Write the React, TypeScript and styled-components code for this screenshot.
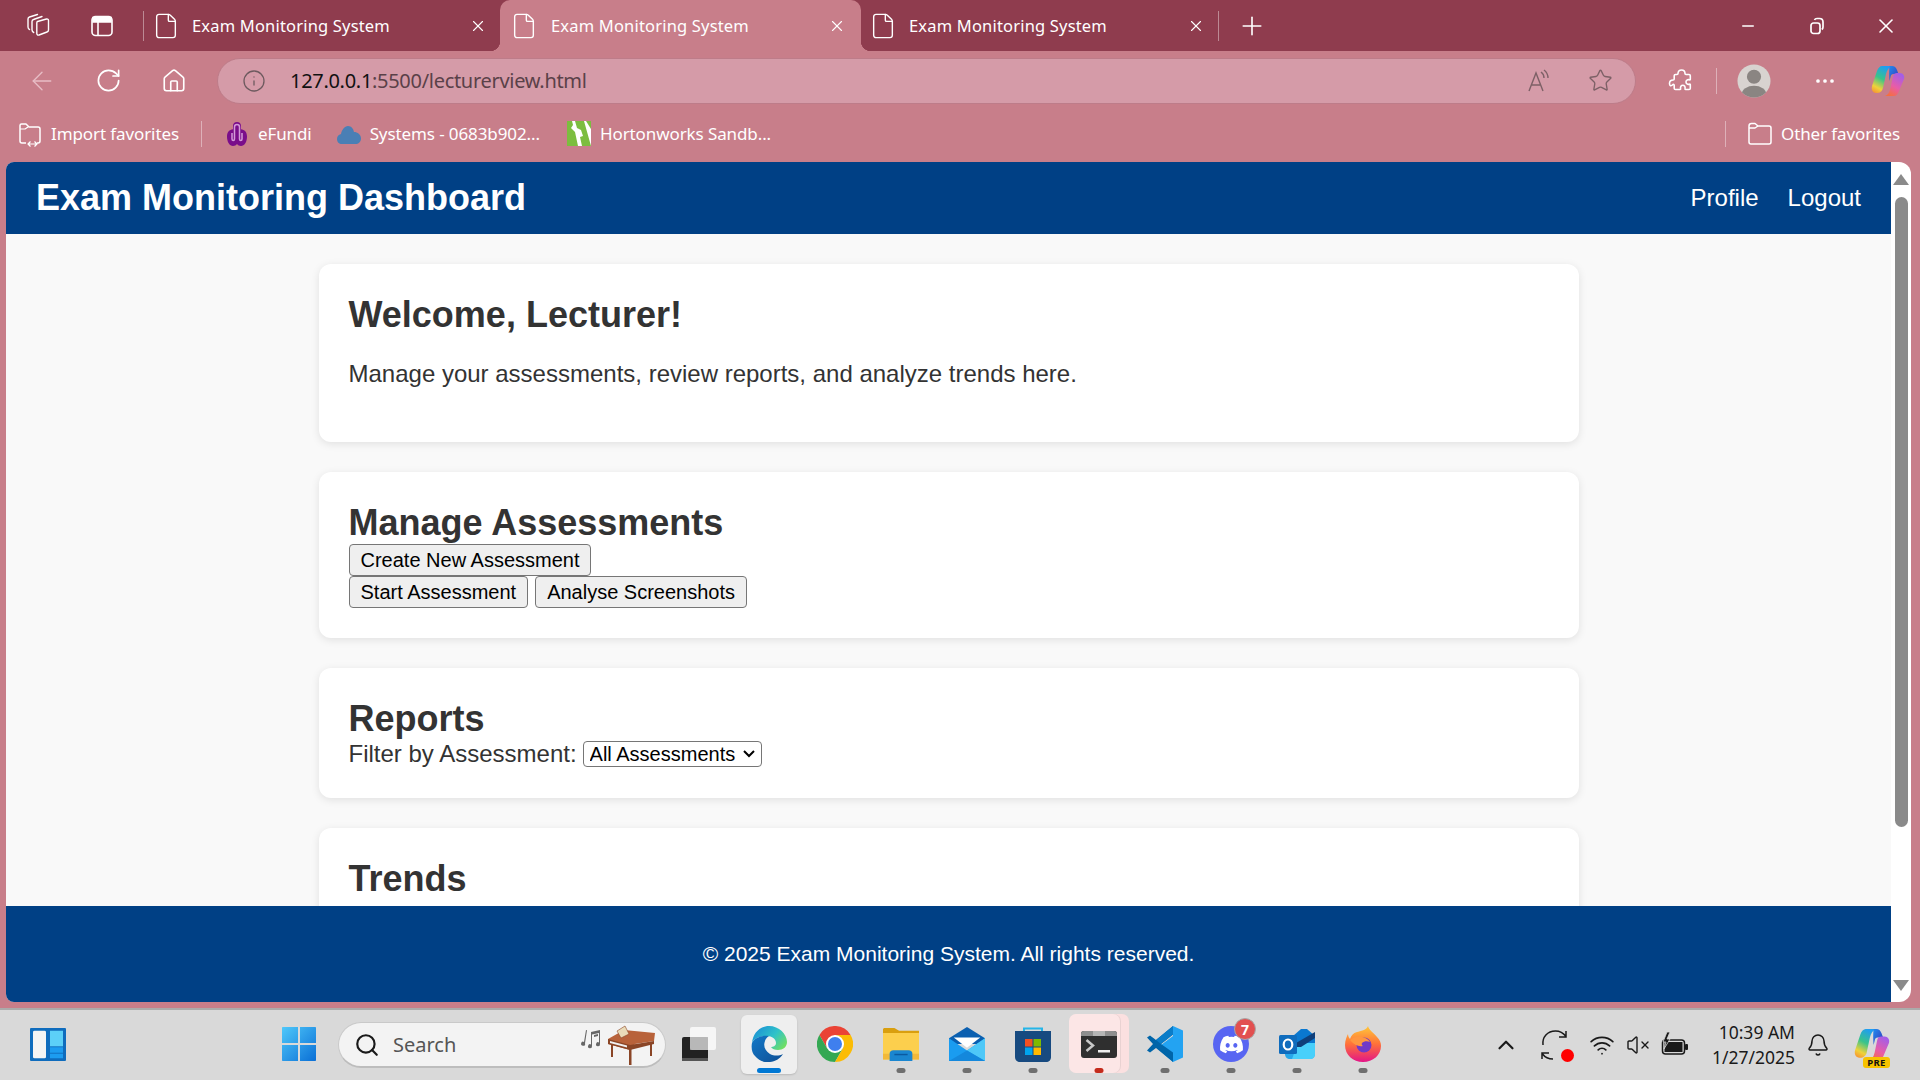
import React from "react";
import styled, { createGlobalStyle } from "styled-components";
import { ArrowLeft, RotateCw, Home, Info, Star, MoreHorizontal, Plus, X, File, Minus, Search, ChevronUp, Bell, Wifi, VolumeX } from "lucide-react";
import { FaDiscord } from "react-icons/fa6";

const Global = createGlobalStyle`
  html, body { margin: 0; padding: 0; width: 1920px; height: 1080px; overflow: hidden; }
  body { font-family: "Liberation Sans", Arial, sans-serif; }
`;

const UI = `"Noto Sans", "Open Sans", sans-serif`;

const Screen = styled.div`
  width: 1920px; height: 1080px; display: flex; flex-direction: column; background: #c87e8a; overflow: hidden;
`;
const TabStrip = styled.div`
  height: 51px; flex: none; background: #8f3c4e; display: flex; align-items: stretch; color: #fff; font-family: ${UI};
`;
const StripTools = styled.div`
  display: flex; padding-left: 6px; align-items: center;
`;
const Slot = styled.div<{ $w?: number; $dark?: boolean }>`
  width: ${(p) => p.$w ?? 66}px; flex: none; display: flex; align-items: center; justify-content: center; color: ${(p) => (p.$dark ? "#1a1a1a" : "#fff")};
`;
const VLine = styled.div<{ $h?: number; $ml?: number; $mr?: number }>`
  width: 1px; height: ${(p) => p.$h ?? 30}px; align-self: center; flex: none;
  margin-left: ${(p) => p.$ml ?? 0}px; margin-right: ${(p) => p.$mr ?? 0}px;
  background: rgba(255,255,255,.4);
`;
const Tab = styled.div<{ $active?: boolean; $w: number }>`
  position: relative; width: ${(p) => p.$w}px; flex: none; display: flex; align-items: center; gap: ${(p) => (p.$active ? 13 : 12)}px;
  padding: 0 ${(p) => (p.$active ? 15 : 13)}px 0 ${(p) => (p.$active ? 10 : 8)}px; box-sizing: border-box; font-size: 16.5px; letter-spacing: 0.18px;
  ${(p) => p.$active && `
    background: #c87e8a; border-radius: 10px 10px 0 0;
    &::before, &::after { content: ""; position: absolute; bottom: 0; width: 10px; height: 10px; }
    &::before { left: -10px; background: radial-gradient(circle at 0 0, transparent 10px, #c87e8a 10.5px); }
    &::after { right: -10px; background: radial-gradient(circle at 100% 0, transparent 10px, #c87e8a 10.5px); }
  `}
`;
const TabTitle = styled.span`
  flex: 1; white-space: nowrap;
`;
const Caption = styled.div`
  margin-left: auto; display: flex; align-items: center;
`;
const ToolRow = styled.div`
  height: 59px; flex: none; display: flex; align-items: center; padding: 0 7px 0 9px; color: #fff;
`;
const AddressPill = styled.div`
  margin-left: 10px; margin-right: 12px; flex: 1; height: 46px; box-sizing: border-box; border-radius: 23px; background: #d59ba8;
  border: 1px solid #bd7c89; display: flex; align-items: center; padding: 0 22px 0 24px; font-family: ${UI}; font-size: 20px;
  color: #5a4148; letter-spacing: -0.3px;
`;
const UrlHost = styled.span`
  color: #111; margin-left: 24px;
`;
const PillEnd = styled.div`
  margin-left: auto; display: flex; gap: 36px; align-items: center; color: #7d6066;
`;
const BookmarkRow = styled.div`
  height: 52px; flex: none; box-sizing: border-box; display: flex; align-items: center; color: #fff; font-family: ${UI}; font-size: 17px; padding: 0 0 5px 17px; letter-spacing: -0.1px;
`;
const Bookmark = styled.div<{ $ml?: number; $mr?: number; $gap?: number }>`
  display: flex; align-items: center; gap: ${(p) => p.$gap ?? 8}px; margin-left: ${(p) => p.$ml ?? 0}px; margin-right: ${(p) => p.$mr ?? 0}px; white-space: nowrap;
`;
const Spacer = styled.div`
  flex: 1;
`;
const PageFrame = styled.div`
  height: 840px; flex: none; margin: 0 9px 0 6px; display: flex; border-radius: 8px 12px 12px 8px; overflow: hidden;
`;
const PageColumn = styled.div`
  flex: 1; min-width: 0; display: flex; flex-direction: column; background: #f9f9f9;
`;
const Header = styled.header`
  height: 72px; flex: none; background: #004085; color: #fff; display: flex; align-items: center; padding: 0 30px;
`;
const Title = styled.h1`
  font-size: 36px; font-weight: 700; margin: 0;
`;
const Nav = styled.nav`
  margin-left: auto; display: flex; gap: 29px; font-size: 24px;
`;
const Main = styled.main`
  flex: 1; min-height: 0; overflow: hidden; padding: 30px 0 0; display: flex; flex-direction: column; align-items: center; gap: 30px;
`;
const Card = styled.section`
  width: 1260px; flex: none; box-sizing: border-box; background: #fff; border-radius: 12px; padding: 30px; box-shadow: 0 2px 8px rgba(0,0,0,.1); color: #333;
`;
const Heading = styled.h2`
  font-size: 36px; line-height: 41px; font-weight: 700; margin: 0;
`;
const Lead = styled.p`
  font-size: 24px; line-height: 28px; margin: 25px 0 24px;
`;
const ButtonRow = styled.div`
  display: flex; gap: 7px; margin-top: 1px; &:last-child { margin-top: 0; }
`;
const Btn = styled.button`
  font-family: "Liberation Sans", Arial, sans-serif; font-size: 20px; height: 32px; padding: 0 11px; box-sizing: border-box; color: #000;
  background: #efefef; border: 1px solid #767676; border-radius: 4px;
`;
const FilterRow = styled.div`
  display: flex; align-items: center; gap: 6px; font-size: 24px; height: 29px;
`;
const chevron = encodeURIComponent(`<svg xmlns="http://www.w3.org/2000/svg" width="14" height="9" viewBox="0 0 14 9"><path d="M2 2l5 5 5-5" fill="none" stroke="#000" stroke-width="2"/></svg>`);
const Select = styled.select`
  appearance: none; font-family: "Liberation Sans", Arial, sans-serif; font-size: 20px; width: 179px; height: 26px; padding: 0 0 0 6px; color: #000;
  background: #fff url("data:image/svg+xml,${chevron}") no-repeat right 5px center; border: 1px solid #767676; border-radius: 4px;
`;
const Footer = styled.footer`
  height: 96px; flex: none; background: #004085; color: #fff; display: flex; align-items: center; justify-content: center; font-size: 21px;
`;
const Scrollbar = styled.div`
  width: 20px; flex: none; background: #fff; display: flex; flex-direction: column; align-items: center; padding: 12px 0 11px; box-sizing: border-box;
`;
const Arrow = styled.div<{ $down?: boolean }>`
  width: 0; height: 0; border-left: 8px solid transparent; border-right: 8px solid transparent;
  ${(p) => (p.$down ? "border-top: 11px solid #8a8a8a;" : "border-bottom: 11px solid #8a8a8a;")}
`;
const Thumb = styled.div`
  width: 13px; height: 630px; background: #8a8a8a; border-radius: 7px; margin-top: 12px; margin-bottom: auto;
`;
const Taskbar = styled.div`
  margin-top: 6px; height: 72px; flex: none; box-sizing: border-box; background: #d9d9d9; border-top: 2px solid #ababab; display: flex; align-items: center; padding: 0 17px 0 15px;
`;
const TaskItem = styled.div<{ $mark?: "blue" | "red" | "gray"; $tile?: "light" | "pink"; $ml?: number }>`
  position: relative; width: 66px; height: 62px; flex: none; display: flex; align-items: center; justify-content: center; margin-left: ${(p) => p.$ml ?? 0}px;
  ${(p) => p.$tile === "light" && `&::before { content: ""; position: absolute; left: 5px; right: 5px; top: 1px; bottom: 2px; background: #efefef; border-radius: 6px; box-shadow: 0 1px 2px rgba(0,0,0,.15); }`}
  ${(p) => p.$tile === "pink" && `&::before { content: ""; position: absolute; left: 3px; right: 12px; top: 0; bottom: 3px; background: #fce6e6; border-radius: 7px; box-shadow: 1px 0 0 #e9d2d2, 9px 0 0 #fbe0e0; }`}
  ${(p) => p.$mark && `&::after { content: ""; position: absolute; bottom: 3px; left: 50%; transform: translateX(-50%); height: 5px; border-radius: 3px;
    width: ${p.$mark === "blue" ? 24 : 9}px; background: ${p.$mark === "blue" ? "#0078d4" : p.$mark === "red" ? "#c42b1c" : "#6f6f6f"}; }`}
  & > svg { position: relative; margin-top: -2px; }
`;
const SearchPill = styled.div`
  margin-left: 6px; width: 328px; height: 46px; flex: none; box-sizing: border-box; background: #f3f3f3; border: 1px solid #c9c9c9; border-bottom: 2px solid #bdbdbd; border-radius: 23px;
  display: flex; align-items: center; padding: 0 9px 0 15px; gap: 13px; color: #555; font-family: ${UI}; font-size: 20px;
`;
const PillArt = styled.div`
  margin-left: auto; display: flex; align-items: center;
`;
const DiscordDisc = styled.div`
  width: 36px; height: 36px; margin-top: -2px; border-radius: 50%; background: #5865f2; display: flex; align-items: center; justify-content: center;
`;
const Badge = styled.div`
  position: absolute; top: 4px; right: 8px; width: 22px; height: 22px; border-radius: 50%; background: #e25050; border: 1px solid #a8a8a8; box-sizing: border-box;
  color: #fff; font-family: ${UI}; font-weight: 700; font-size: 14px; display: flex; align-items: center; justify-content: center;
`;
const Tray = styled.div`
  margin-left: auto; display: flex; align-items: center; color: #1a1a1a;
`;
const Clock = styled.div`
  width: 101px; flex: none; text-align: right; font-family: ${UI}; font-size: 17.5px; line-height: 25px; color: #1a1a1a;
`;
const IconWrap = styled.span`
  position: relative; display: inline-flex;
`;
const RecDot = styled.span`
  position: absolute; right: -1px; bottom: 1px; width: 13px; height: 13px; border-radius: 50%; background: #f00;
`;
const PreTag = styled.span`
  position: absolute; left: 9px; bottom: -5px; width: 27px; height: 11px; border-radius: 3px; background: #f7c300; color: #111; font-family: ${UI}; font-weight: 700;
  font-size: 9.5px; line-height: 11px; letter-spacing: .4px; text-align: center;
`;

const StackIcon = () => (
  <svg width="28" height="28" viewBox="0 0 28 28" fill="none" stroke="#fff" strokeWidth="1.4" strokeLinejoin="round" strokeLinecap="round">
    <path d="M13.5 9.5l9-2.500c1.200-.3 2 .4 2 1.500v9.500c0 1-.6 1.700-1.500 2l-8 3c-1.200.4-2.200-.3-2.200-1.500V11c0-.8.2-1.300.7-1.500z" />
    <path d="M9.700 20.500c-1-.5-1.700-1.500-1.700-2.700V9.500c0-1 .5-1.700 1.500-2l8.500-3" />
    <path d="M5.500 17.500c-1-.5-1.500-1.300-1.500-2.500V7c0-1 .5-1.700 1.500-2l8-2.500" />
  </svg>
);
const PanelIcon = () => (
  <svg width="24" height="24" viewBox="0 0 24 24" fill="none" stroke="#fff" strokeWidth="1.6">
    <rect x="2" y="2.500" width="20" height="19" rx="3.500" />
    <path d="M3 3.500h18v4.500H3z" fill="#fff" />
    <path d="M8 8v13" />
  </svg>
);
const RestoreIcon = () => (
  <svg width="20" height="20" viewBox="0 0 20 20" fill="none" stroke="#fff" strokeWidth="1.7">
    <rect x="4" y="7" width="9" height="10.500" rx="2.500" />
    <path d="M7.500 4c.4-1 1.200-1.500 2.500-1.500h2.500c2 0 3.500 1.200 3.500 3.500v5c0 1-.4 2-1.200 2.500" />
  </svg>
);
const PuzzleIcon = () => (
  <svg width="28" height="28" viewBox="0 0 28 28" fill="none" stroke="#fff" strokeWidth="1.6" strokeLinejoin="round">
    <path d="M11 6.500C11 4 12.500 3 14.500 3S18 4 18 6.500c0 .8.4 1 1 1h3c.8 0 1.300.5 1.300 1.300v3.400c0 .6-.4.8-1 .6-1.800-.5-3.300.6-3.300 2.200s1.500 2.700 3.300 2.200c.6-.2 1 0 1 .6v3.400c0 .8-.5 1.300-1.300 1.300h-3.400c-.6 0-.8-.4-.6-1 .5-1.800-.6-3.300-2.200-3.300s-2.700 1.500-2.200 3.300c.2.6 0 1-.6 1H8.500c-.8 0-1.300-.5-1.300-1.300v-3c0-.6-.2-1-1-1C3.700 20 2.500 18.500 2.500 16.500S3.700 13 6.200 13c.8 0 1-.4 1-1V8.800c0-.8.5-1.300 1.300-1.300H10c.6 0 1-.4 1-1z" />
  </svg>
);
const ReadAloud = () => (
  <svg width="26" height="26" viewBox="0 0 26 26" fill="none" stroke="#7d6066" strokeWidth="1.4">
    <path d="M3 23L10 5l7 18M5.500 17h9" />
    <path d="M15 4c2 1.500 3 3.500 3 6M18 2c2.500 2 4 5 4 8" />
  </svg>
);
const ImportIcon = () => (
  <svg width="26" height="26" viewBox="0 0 26 26" fill="none" stroke="#fff" strokeWidth="1.5" strokeLinejoin="round">
    <path d="M9 22H5c-1.200 0-2-.8-2-2V4.500C3 3.500 3.800 3 4.500 3H9l3 3h9c1.200 0 2 .8 2 2v12c0 1.200-.8 2-2 2h-1" />
    <path d="M3 8h5l3-2M11 23h9M13.500 20.500L11 23l2.500 2.500M17.500 20.500L20 23l-2.500 2.500" strokeWidth="1.2" />
  </svg>
);
const FolderIcon = () => (
  <svg width="26" height="24" viewBox="0 0 26 24" fill="none" stroke="#fff" strokeWidth="1.5" strokeLinejoin="round">
    <path d="M2 4c0-1.500 1-2.500 2.500-2.500H8L11 4h11c1.200 0 2 .8 2 2v14c0 1.200-.8 2-2 2H4c-1.200 0-2-.8-2-2z" />
    <path d="M2 6h6l3-2" />
  </svg>
);
const EfundiIcon = () => (
  <svg width="26" height="26" viewBox="0 0 26 26">
    <path fill="#7a0d8a" d="M13 1c2.500 0 4 1.500 4 4v3.200c3.500.3 6 2.800 6 7.300C23 21 20.500 25 17 25c-1.800 0-3.200-.8-4-2-.8 1.200-2.200 2-4 2-3.500 0-6-4-6-9.500C3 11 5.500 8.500 9 8.200V5c0-2.500 1.500-4 4-4z" />
    <path fill="none" stroke="#d49ad8" strokeWidth="1.500" d="M8 12v6c0 2 2.500 2 2.500 0V6c0-1.500 1-2.500 2.500-2.500S15.500 4.500 15.500 6v12c0 2 2.500 2 2.500 0v-6" />
  </svg>
);
const CloudIcon = () => (
  <svg width="26" height="22" viewBox="0 0 26 22"><path fill="#4a7fb5" d="M6 21c-3 0-5-2-5-5 0-2.500 1.500-4.500 4-5 .8-4 3.500-8 7-8 3.500 0 5.500 3 6 6 3.500 0 7 2.500 7 6.500 0 3.500-2.500 5.500-5.500 5.500z" /></svg>
);
const HortonIcon = () => (
  <svg width="24" height="25" viewBox="0 0 24 25">
    <rect width="24" height="25" fill="#fff" />
    <path fill="#7cbd3f" d="M0 0h5l1 4-2 3 4 4 3 14H0zM8 0h9l7 25h-9l-2-9 3-1-2-6-4-2zM19 0h5v8z" />
  </svg>
);
const CopilotLogo = ({ size = 34 }: { size?: number }) => (
  <svg width={size} height={size} viewBox="0 0 34 34">
    <defs>
      <linearGradient id="cpa" x1="0.6" y1="0" x2="0.2" y2="1"><stop offset="0" stopColor="#1f9df2" /><stop offset=".45" stopColor="#39c48a" /><stop offset=".8" stopColor="#f0d23a" /><stop offset="1" stopColor="#f59a33" /></linearGradient>
      <linearGradient id="cpb" x1="0.7" y1="0" x2="0.2" y2="1"><stop offset="0" stopColor="#a35ee8" /><stop offset=".55" stopColor="#e85ca8" /><stop offset="1" stopColor="#f5703a" /></linearGradient>
      <linearGradient id="cpc" x1="0" y1="0" x2="1" y2="1"><stop offset="0" stopColor="#1f8cf0" /><stop offset="1" stopColor="#3a34b8" /></linearGradient>
    </defs>
    <path fill="url(#cpa)" d="M11 2h10c-3 1-5 4-6 8l-3 14c-.6 3-3 5-6 5H5c-3 0-5-3-4-7L6 7c1-3 3-5 5-5z" />
    <path fill="url(#cpc)" d="M18 2h3c2.500 0 4 1.500 5 4l1.500 4h-5c-2 0-2.500 1-3 3l-1 4c-.5-6-.5-11 0-15z" />
    <path fill="url(#cpb)" d="M23 32h-9c3-1 4.500-4 5.500-8l2.500-12c.5-2 2-3 4-3h3c3 0 5 3 4 6l-5 12c-1 3-3 5-5 5z" />
  </svg>
);
const Avatar = () => (
  <svg width="34" height="34" viewBox="0 0 36 36">
    <defs><clipPath id="avc"><circle cx="18" cy="18" r="17.500" /></clipPath></defs>
    <circle cx="18" cy="18" r="17.500" fill="#d8d3d0" />
    <g clipPath="url(#avc)" fill="#8a8582"><circle cx="18" cy="13.500" r="7.500" /><ellipse cx="18" cy="32" rx="13" ry="9" /></g>
  </svg>
);
const WidgetsIcon = () => (
  <svg width="36" height="33" viewBox="0 0 36 36" preserveAspectRatio="none">
    <rect width="36" height="36" fill="#0f6cbd" rx="1" />
    <rect x="3" y="3" width="13" height="30" rx="1.500" fill="#f4f4f4" />
    <rect x="20" y="3" width="13" height="17" fill="#5cd0f8" />
    <rect x="20" y="21" width="13" height="6" fill="#1c9cf0" />
    <rect x="20" y="28" width="13" height="5" fill="#1c9cf0" />
  </svg>
);
const WinLogo = () => (
  <svg width="36" height="36" viewBox="0 0 36 36">
    <defs><linearGradient id="wl" x1="0" y1="0" x2="1" y2="1"><stop offset="0" stopColor="#4fc8fa" /><stop offset="1" stopColor="#0a6fd6" /></linearGradient></defs>
    <path fill="url(#wl)" d="M1 2c0-.6.4-1 1-1h15v16H1zM19 1h15c.6 0 1 .4 1 1v15H19zM1 19h16v16H2c-.6 0-1-.4-1-1zM19 19h16v15c0 .6-.4 1-1 1H19z" />
  </svg>
);
const PianoArt = () => (
  <svg width="76" height="40" viewBox="0 0 76 40">
    <g fill="#666"><path d="M4 17l2-12 1 .2-2 13a2 2 0 1 1-1-1.200zM11 7l9-2v14a2 2 0 1 1-1-1.500V8l-7 1.500V21a2 2 0 1 1-1-1.500zM14 10l4-1v2l-4 1z" /></g>
    <path fill="#b8623a" d="M28 14L44 5l31 3-1 8-19 3-5 6-22-6z" />
    <path fill="#eadbb8" stroke="#8a4526" strokeWidth=".6" d="M37 6l8-5 4 8-8 4z" />
    <path fill="#8a4526" d="M28 14l22 6v5l-22-6zM50 20l24-4v3l-24 6z" />
    <path fill="#f1f1f1" d="M30 16l17 4.500v2L30 18z" />
    <path fill="#8a4526" d="M31 19h2v13h-2zM49 24h2.500v16H49zM70 17h2v14h-2z" />
  </svg>
);
const TaskViewIcon = () => (
  <svg width="36" height="36" viewBox="0 0 36 36">
    <rect x="1" y="11" width="26" height="24" rx="2" fill="#222" />
    <rect x="1" y="32" width="26" height="3" fill="#555" />
    <rect x="9" y="1" width="26" height="23" rx="2" fill="#fafafa" opacity=".85" />
    <rect x="9" y="11" width="18" height="13" fill="#aaa" opacity=".7" />
  </svg>
);
const EdgeLogo = () => (
  <svg width="36" height="36" viewBox="0 0 36 36">
    <defs>
      <linearGradient id="ea" x1="0" y1="0.2" x2="1" y2="0.8"><stop offset="0" stopColor="#1a8fd6" /><stop offset=".55" stopColor="#30c3c8" /><stop offset="1" stopColor="#74e05c" /></linearGradient>
      <linearGradient id="eb" x1="0" y1="0" x2="1" y2="1"><stop offset="0" stopColor="#1278c8" /><stop offset="1" stopColor="#0f4f94" /></linearGradient>
    </defs>
    <path fill="url(#ea)" d="M1 17C2 7 9 0 18 0c10 0 18 8 18 16 0 5-4 8-9 8-3 0-6-1-7-3 2 0 5-1 5-4 0-4-4-7-9-7C9 10 3 12 1 17z" />
    <path fill="url(#eb)" d="M1 17c-1 5 0 10 3 13 4 5 10 7 15 6 5-.6 10-3 13-8-4 2-9 2-13 0-5-3-7-8-5-13 .6-2 2-4 4-5-8-1-15 2-17 7z" />
  </svg>
);
const ChromeLogo = () => (
  <svg width="36" height="36" viewBox="0 0 36 36">
    <path fill="#ea4335" d="M2.400 9A18 18 0 0 1 33.600 9H18L10.200 22.500z" />
    <path fill="#34a853" d="M2.400 9L10.200 22.500H25.800L18 36A18 18 0 0 1 2.400 9z" />
    <path fill="#fbbc05" d="M33.600 9H18L25.800 22.500 18 36A18 18 0 0 0 33.600 9z" />
    <circle cx="18" cy="18" r="9" fill="#fff" />
    <circle cx="18" cy="18" r="7" fill="#3f7fee" />
  </svg>
);
const FilesIcon = () => (
  <svg width="36" height="33" viewBox="0 0 38 46" preserveAspectRatio="none">
    <path fill="#d99f0f" d="M0 2c0-1 .6-2 2-2h10l5 4h21v6H0z" />
    <path fill="#fccf4d" d="M0 7h38v37H0z" />
    <path fill="#f2b93a" d="M0 36h38v8H0z" />
    <path fill="#1a86d0" d="M7 46V36c0-3 1.500-5 4-5h16c2.500 0 4 2 4 5v10z" />
    <rect x="12" y="36" width="14" height="2" fill="#0b5aa0" />
  </svg>
);
const MailIcon = () => (
  <svg width="36" height="34" viewBox="0 0 38 36" preserveAspectRatio="none">
    <path fill="#0a5fb0" d="M19 0L38 12v6H0v-6z" />
    <path fill="#fff" d="M5 11h28L19 22z" />
    <path fill="#1a9cf0" d="M0 12l19 13 19-13v24H0z" />
    <path fill="#4ec8f8" d="M38 12v24L19 25z" />
    <path fill="#1488dc" d="M0 36l19-11 19 11z" />
  </svg>
);
const StoreIcon = () => (
  <svg width="36" height="36" viewBox="0 0 36 36">
    <path fill="none" stroke="#25b5e8" strokeWidth="2" d="M9 9V2.500h18V9" />
    <path fill="#174a80" d="M0 5h36v26c0 3-2 5-5 5H5c-3 0-5-2-5-5z" />
    <rect x="10" y="13" width="7.500" height="7.500" fill="#f25022" />
    <rect x="18.500" y="13" width="7.500" height="7.500" fill="#7fba00" />
    <rect x="10" y="21.500" width="7.500" height="7.500" fill="#00a4ef" />
    <rect x="18.500" y="21.500" width="7.500" height="7.500" fill="#ffb900" />
  </svg>
);
const TerminalIcon = () => (
  <svg width="36" height="27" viewBox="0 0 36 27">
    <rect width="36" height="27" rx="3" fill="#2f2f2f" />
    <path fill="#8e8e8e" d="M3 0h9v5H0V3c0-2 1-3 3-3zM24 0h9c2 0 3 1 3 3v2H24z" />
    <rect x="12" width="12" height="5" fill="#b5b5b5" />
    <path fill="none" stroke="#c8c8c8" strokeWidth="2.500" d="M5.500 9l6.500 5.500-6.500 5.500" />
    <rect x="17" y="19" width="12" height="2.500" fill="#eee" />
  </svg>
);
const VsCodeIcon = () => (
  <svg width="36" height="36" viewBox="0 0 36 36">
    <path fill="#23a3f2" d="M26 0l10 4.500v27L26 36 10 22l16-12z" />
    <path fill="#0065a9" d="M26 0L9 14 3 9.500 0 11.500 6 18l-6 6.500 3 2L9 22l17 14v-9.500L14 18 26 8.500z" />
    <path fill="#0a7cc8" d="M26 0v8.500L14 18 9 14z" />
  </svg>
);
const OutlookIcon = () => (
  <svg width="36" height="30" viewBox="0 0 36 30">
    <path fill="#28a8ea" d="M6 14h30v11c0 3-2 5-5 5H11c-3 0-5-2-5-5z" />
    <path fill="#50d9ff" d="M19 14h17v11c0 3-2 5-5 5H13z" opacity=".8" />
    <path fill="#0a78d0" d="M22 0h6l8 7v7H14V7z" />
    <path fill="#0f3f7a" d="M17 14l19-11v6L22 18h-5z" />
    <rect y="6" width="18" height="19" rx="1.500" fill="#0f6cbd" />
    <ellipse cx="9" cy="15.500" rx="4.300" ry="5" fill="none" stroke="#fff" strokeWidth="2.200" />
  </svg>
);
const FirefoxIcon = () => (
  <svg width="36" height="36" viewBox="0 0 36 36">
    <defs><linearGradient id="ff" x1="0.5" y1="0" x2="0.5" y2="1"><stop offset="0" stopColor="#ffc83a" /><stop offset=".5" stopColor="#ff7139" /><stop offset="1" stopColor="#e31587" /></linearGradient></defs>
    <path fill="url(#ff)" d="M23 0c1 4 5 6 9 11 3 3 4 6 4 9 0 9-8 16-18 16S0 29 0 19c0-5 2-9 3-11 0 2 1 4 2 5 1-3 3-6 7-7 3-.8 10-2 11-6z" />
    <circle cx="19" cy="19" r="7.500" fill="#7139c8" />
    <path fill="#ff9640" d="M5 14c3-3 8-4 12-3 4 .5 7 3 8 5-3-1.500-6-1-8 1-1 2 1 3 1 3-4 1-9-1-13-6z" />
  </svg>
);
const SyncIcon = () => (
  <svg width="36" height="36" viewBox="0 0 36 36" fill="none" stroke="#1a1a1a" strokeWidth="1.500">
    <path d="M29 4v6h-7M29 9.500C26 5.500 22 4 18.500 4 10.500 4 5 10 6 18" />
    <path d="M5 32v-6h7M5.500 27c3 4 7 5 10.500 5" />
  </svg>
);
const BatteryIcon = () => (
  <svg width="28" height="26" viewBox="0 0 28 26">
    <rect x="1.500" y="8" width="22" height="14" rx="3" fill="none" stroke="#1a1a1a" strokeWidth="1.500" />
    <rect x="3.500" y="10" width="18" height="10" fill="#1a1a1a" />
    <rect x="24" y="12" width="3" height="6" rx="1" fill="#1a1a1a" />
    <path d="M6 0l-4 10h3l-2 7 6-10H6l3-7z" fill="#1a1a1a" stroke="#d9d9d9" strokeWidth=".8" />
  </svg>
);

const tabs = [
  { w: 356, active: false },
  { w: 361, active: true },
  { w: 357, active: false },
];

export default function App() {
  return (
    <Screen>
      <Global />
      <TabStrip>
        <StripTools>
          <Slot $w={64}><StackIcon /></Slot>
          <Slot $w={64}><PanelIcon /></Slot>
        </StripTools>
        <VLine $ml={9} />
        {tabs.map((t, i) => (
          <Tab key={i} $w={t.w} $active={t.active}>
            <File size={28} strokeWidth={1.2} />
            <TabTitle>Exam Monitoring System</TabTitle>
            <X size={18} strokeWidth={1.5} />
          </Tab>
        ))}
        <VLine />
        <Slot $w={66}><Plus size={30} strokeWidth={1.3} /></Slot>
        <Caption>
          <Slot $w={69}><Minus size={18} strokeWidth={2} /></Slot>
          <Slot $w={69}><RestoreIcon /></Slot>
          <Slot $w={69}><X size={24} strokeWidth={1.6} /></Slot>
        </Caption>
      </TabStrip>
      <ToolRow>
        <Slot><ArrowLeft size={30} strokeWidth={1.1} color="#e7bdc5" /></Slot>
        <Slot><RotateCw size={27} strokeWidth={1.5} /></Slot>
        <Slot><Home size={26} strokeWidth={1.5} /></Slot>
        <AddressPill>
          <Info size={24} strokeWidth={1.3} color="#6e5a5f" />
          <UrlHost>127.0.0.1</UrlHost>:5500/lecturerview.html
          <PillEnd>
            <ReadAloud />
            <Star size={25} strokeWidth={1.3} />
          </PillEnd>
        </AddressPill>
        <Slot><PuzzleIcon /></Slot>
        <VLine $h={26} $ml={2} $mr={4} />
        <Slot><Avatar /></Slot>
        <Slot $w={76}><MoreHorizontal size={24} strokeWidth={1.7} /></Slot>
        <Slot $w={50}><CopilotLogo /></Slot>
      </ToolRow>
      <BookmarkRow>
        <Bookmark $gap={8}><ImportIcon />Import favorites</Bookmark>
        <VLine $h={26} $ml={22} />
        <Bookmark $ml={22}><EfundiIcon />eFundi</Bookmark>
        <Bookmark $ml={24}><CloudIcon />Systems - 0683b902...</Bookmark>
        <Bookmark $ml={27} $gap={9}><HortonIcon />Hortonworks Sandb...</Bookmark>
        <Spacer />
        <VLine $h={26} />
        <Bookmark $ml={21} $mr={20}><FolderIcon />Other favorites</Bookmark>
      </BookmarkRow>
      <PageFrame>
        <PageColumn>
          <Header>
            <Title>Exam Monitoring Dashboard</Title>
            <Nav>
              <span>Profile</span>
              <span>Logout</span>
            </Nav>
          </Header>
          <Main>
            <Card>
              <Heading>Welcome, Lecturer!</Heading>
              <Lead>Manage your assessments, review reports, and analyze trends here.</Lead>
            </Card>
            <Card>
              <Heading>Manage Assessments</Heading>
              <ButtonRow><Btn>Create New Assessment</Btn></ButtonRow>
              <ButtonRow><Btn>Start Assessment</Btn><Btn>Analyse Screenshots</Btn></ButtonRow>
            </Card>
            <Card>
              <Heading>Reports</Heading>
              <FilterRow>
                <span>Filter by Assessment:</span>
                <Select defaultValue="all"><option value="all">All Assessments</option></Select>
              </FilterRow>
            </Card>
            <Card>
              <Heading>Trends</Heading>
            </Card>
          </Main>
          <Footer>© 2025 Exam Monitoring System. All rights reserved.</Footer>
        </PageColumn>
        <Scrollbar>
          <Arrow />
          <Thumb />
          <Arrow $down />
        </Scrollbar>
      </PageFrame>
      <Taskbar>
        <TaskItem><WidgetsIcon /></TaskItem>
        <TaskItem $ml={185}><WinLogo /></TaskItem>
        <SearchPill>
          <Search size={26} strokeWidth={2} color="#1a1a1a" />
          Search
          <PillArt><PianoArt /></PillArt>
        </SearchPill>
        <TaskItem><TaskViewIcon /></TaskItem>
        <TaskItem $ml={4} $tile="light" $mark="blue"><EdgeLogo /></TaskItem>
        <TaskItem><ChromeLogo /></TaskItem>
        <TaskItem $mark="gray"><FilesIcon /></TaskItem>
        <TaskItem $mark="gray"><MailIcon /></TaskItem>
        <TaskItem $mark="gray"><StoreIcon /></TaskItem>
        <TaskItem $mark="red" $tile="pink"><TerminalIcon /></TaskItem>
        <TaskItem $mark="gray"><VsCodeIcon /></TaskItem>
        <TaskItem $mark="gray">
          <DiscordDisc><FaDiscord size={25} color="#fff" /></DiscordDisc>
          <Badge>7</Badge>
        </TaskItem>
        <TaskItem $mark="gray"><OutlookIcon /></TaskItem>
        <TaskItem $mark="gray"><FirefoxIcon /></TaskItem>
        <Tray>
          <Slot $w={40} $dark><ChevronUp size={26} strokeWidth={2} /></Slot>
          <Slot $w={58}><IconWrap><SyncIcon /><RecDot /></IconWrap></Slot>
          <Slot $w={36} $dark><Wifi size={26} strokeWidth={1.6} /></Slot>
          <Slot $w={36} $dark><VolumeX size={24} strokeWidth={1.4} /></Slot>
          <Slot $w={38}><BatteryIcon /></Slot>
          <Clock>10:39 AM<br />1/27/2025</Clock>
          <Slot $w={46} $dark><Bell size={24} strokeWidth={1.5} /></Slot>
          <Slot $w={62}><IconWrap><CopilotLogo size={36} /><PreTag>PRE</PreTag></IconWrap></Slot>
        </Tray>
      </Taskbar>
    </Screen>
  );
}
